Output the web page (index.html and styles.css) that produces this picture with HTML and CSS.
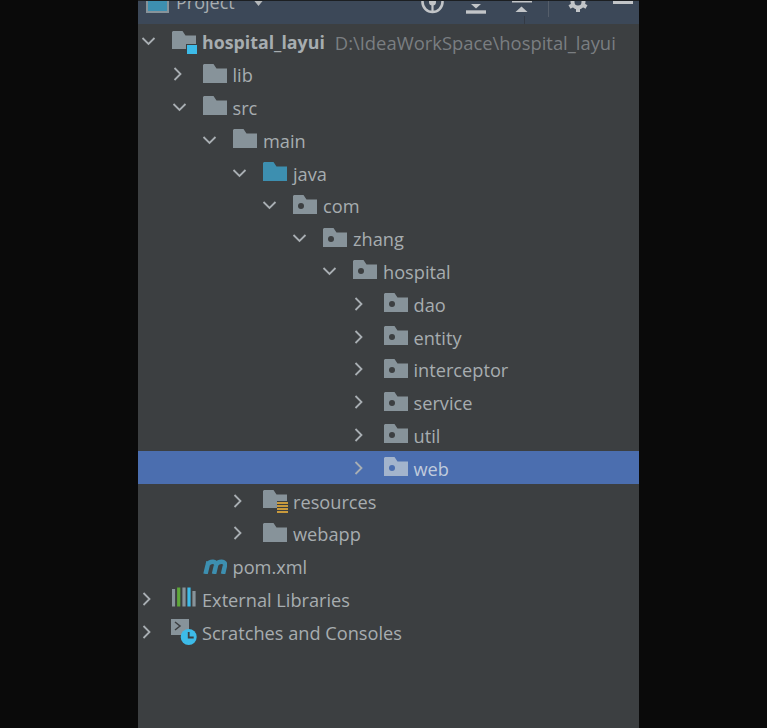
FILE: index.html
```html
<!DOCTYPE html>
<html>
<head>
    <title>Project</title>
    <link rel="stylesheet" href="styles.css">
</head>
<body>
    <svg class="defs" width="0" height="0">
        <symbol id="open" viewBox="0 0 16 16"><path d="M1.500 5l6 6 6-6" fill="none" stroke="#a9afb3" stroke-width="1.8"/></symbol>
        <symbol id="closed" viewBox="0 0 16 16"><path d="M2.500 2l6 6-6 6" fill="none" stroke="#a9afb3" stroke-width="1.8"/></symbol>
        <symbol id="folder" viewBox="0 0 24 20"><path d="M1 1h9.500l3 4.500H24V20H0V2z" fill="#87939a"/></symbol>
        <symbol id="pkg" viewBox="0 0 24 20"><path d="M1 1h9.500l3 4.500H24V20H0V2z" fill="#87939a"/><circle cx="8" cy="12" r="3" fill="#3c3f41"/></symbol>
        <symbol id="source" viewBox="0 0 24 20"><path d="M1 1h9.500l3 4.500H24V20H0V2z" fill="#3d8fb0"/></symbol>
    </svg>

    <div class="panel">
        <div class="toolbar">
            <div class="toolbar-row">
                <svg class="view-icon" width="23" height="22" viewBox="0 0 23 22"><rect x="1" y="1" width="21" height="20" fill="#3d8fb0" stroke="#87939a" stroke-width="2"/></svg>
                <span class="toolbar-title">Project</span>
                <svg class="caret" width="13" height="8" viewBox="0 0 13 8"><path d="M0 0h13L6.500 8z" fill="#b4b8bb"/></svg>
                <span class="spacer"></span>
                <svg class="tool globe" width="23" height="24" viewBox="0 0 23 24"><circle cx="11.500" cy="12" r="10" fill="none" stroke="#c2c5c8" stroke-width="2.600"/><circle cx="11.500" cy="12" r="3.500" fill="#c2c5c8"/><path d="M11.500 12v10" stroke="#c2c5c8" stroke-width="2.200"/></svg>
                <svg class="tool collapse" width="20" height="24" viewBox="0 0 20 24"><path d="M5 14h10l-5 4.500z" fill="#c2c5c8"/><path d="M0 22h20" stroke="#c2c5c8" stroke-width="3.400"/></svg>
                <svg class="tool expand" width="20" height="24" viewBox="0 0 20 24"><path d="M0 11h20" stroke="#c2c5c8" stroke-width="3"/><path d="M3.500 22h12l-6-5.500z" fill="#c2c5c8"/></svg>
                <span class="separator"></span>
                <svg class="tool gear" width="20" height="24" viewBox="0 0 20 24"><circle cx="10" cy="12" r="5.500" fill="none" stroke="#c2c5c8" stroke-width="4"/><path d="M10 2v4M10 18v4M1.500 7l3.500 2M15 15l3.500 2M1.500 17l3.500-2M15 9l3.500-2" stroke="#c2c5c8" stroke-width="4"/></svg>
                <span class="minimize"></span>
            </div>
        </div>

        <div class="tree">
            <div class="row d0"><svg class="chev"><use href="#open"/></svg>
                <svg class="icon icon-wide" viewBox="0 0 25 23"><path d="M1 0h9.500l3 4.500H24V18H0V1z" fill="#87939a"/><rect x="14.500" y="13.500" width="11" height="10" fill="#3dbbe8" stroke="#3c3f41"/></svg>
                <span class="name strong">hospital_layui</span><span class="path">D:\IdeaWorkSpace\hospital_layui</span></div>
            <div class="row d1"><svg class="chev"><use href="#closed"/></svg><svg class="icon"><use href="#folder"/></svg><span class="name">lib</span></div>
            <div class="row d1"><svg class="chev"><use href="#open"/></svg><svg class="icon"><use href="#folder"/></svg><span class="name">src</span></div>
            <div class="row d2"><svg class="chev"><use href="#open"/></svg><svg class="icon"><use href="#folder"/></svg><span class="name">main</span></div>
            <div class="row d3"><svg class="chev"><use href="#open"/></svg><svg class="icon"><use href="#source"/></svg><span class="name">java</span></div>
            <div class="row d4"><svg class="chev"><use href="#open"/></svg><svg class="icon"><use href="#pkg"/></svg><span class="name">com</span></div>
            <div class="row d5"><svg class="chev"><use href="#open"/></svg><svg class="icon"><use href="#pkg"/></svg><span class="name">zhang</span></div>
            <div class="row d6"><svg class="chev"><use href="#open"/></svg><svg class="icon"><use href="#pkg"/></svg><span class="name">hospital</span></div>
            <div class="row d7"><svg class="chev"><use href="#closed"/></svg><svg class="icon"><use href="#pkg"/></svg><span class="name">dao</span></div>
            <div class="row d7"><svg class="chev"><use href="#closed"/></svg><svg class="icon"><use href="#pkg"/></svg><span class="name">entity</span></div>
            <div class="row d7"><svg class="chev"><use href="#closed"/></svg><svg class="icon"><use href="#pkg"/></svg><span class="name">interceptor</span></div>
            <div class="row d7"><svg class="chev"><use href="#closed"/></svg><svg class="icon"><use href="#pkg"/></svg><span class="name">service</span></div>
            <div class="row d7"><svg class="chev"><use href="#closed"/></svg><svg class="icon"><use href="#pkg"/></svg><span class="name">util</span></div>
            <div class="row d7 selected"><svg class="chev"><use href="#closed"/></svg>
                <svg class="icon" viewBox="0 0 24 20"><path d="M1 1h9.500l3 4.500H24V20H0V2z" fill="#a3b4cc"/><circle cx="8" cy="12" r="3" fill="#4b6eaf"/></svg>
                <span class="name">web</span></div>
            <div class="row d3"><svg class="chev"><use href="#closed"/></svg>
                <svg class="icon icon-wide" viewBox="0 0 25 23"><path d="M1 0h9.500l3 4.500H24V11H14v7H0V1z" fill="#87939a"/><path d="M14 13h11M14 16h11M14 19h11M14 22h11" stroke="#c99a3c" stroke-width="2"/></svg>
                <span class="name">resources</span></div>
            <div class="row d3"><svg class="chev"><use href="#closed"/></svg><svg class="icon"><use href="#folder"/></svg><span class="name">webapp</span></div>
            <div class="row d1"><span class="chev"></span>
                <svg class="icon icon-maven" viewBox="0 0 24 15"><path d="M2.500 15L5.500 2.500M4.500 6C7 1.500 14 1.500 13 6.500L11 15M13 6C15.500 1.500 23 1.500 22 6.500L20 15" fill="none" stroke="#3d8fb0" stroke-width="4.500"/></svg>
                <span class="name">pom.xml</span></div>
            <div class="row d0"><svg class="chev"><use href="#closed"/></svg>
                <svg class="icon" viewBox="0 0 24 20"><path d="M1.500 2v17.500M12 .5v19M22 4v15.500" fill="none" stroke="#87939a" stroke-width="3.200"/><path d="M6.700 .5v19" stroke="#5fa83a" stroke-width="3.200"/><path d="M17 .5v19" stroke="#3dbbe8" stroke-width="3.200"/></svg>
                <span class="name">External Libraries</span></div>
            <div class="row d0"><svg class="chev"><use href="#closed"/></svg>
                <svg class="icon icon-scratch" viewBox="0 0 26 26"><rect x="0" y="0" width="18" height="16" fill="#87939a"/><path d="M4 3l5 4-5 4" fill="none" stroke="#3c3f41" stroke-width="1.500"/><circle cx="17.700" cy="18" r="8" fill="#3dbbe8"/><path d="M17.700 13v5.500h5" fill="none" stroke="#3c3f41" stroke-width="1.800"/></svg>
                <span class="name">Scratches and Consoles</span></div>
        </div>
    </div>
</body>
</html>
```

FILE: styles.css
```css
html, body {
    margin: 0;
    height: 100%;
    overflow: hidden;
}
body {
    background-color: #0a0a0a;
    font-family: "Open Sans", sans-serif;
    color: #a7adb0;
}
.defs {
    display: block;
}
.panel {
    width: 501px;
    height: 100%;
    margin-left: 138px;
    background-color: #3c3f41;
}
.toolbar {
    position: relative;
    height: 23px;
    background-color: #3c4858;
    border-top: 1px solid #1c1f22;
    overflow: hidden;
}
.toolbar::after {
    content: "";
    position: absolute;
    left: 386px;
    top: 15px;
    width: 1px;
    height: 8px;
    background-color: #333a45;
}
.toolbar-row {
    display: flex;
    align-items: center;
    height: 2px;
    padding-left: 8px;
}
.view-icon {
    flex: none;
}
.toolbar-title {
    margin-left: 7px;
    font-size: 18px;
    color: #a7adb0;
}
.caret {
    margin-left: 17px;
    flex: none;
}
.spacer {
    flex: 1;
}
.tool {
    flex: none;
}
.globe {
    margin-right: 22px;
}
.collapse {
    margin-right: 26px;
}
.expand {
    margin-right: 16px;
}
.separator {
    flex: none;
    width: 1px;
    height: 30px;
    margin-right: 19px;
    background-color: #555e6a;
}
.gear {
    margin-right: 25px;
}
.minimize {
    flex: none;
    width: 20px;
    height: 4px;
    margin-right: 6px;
    background-color: #c2c5c8;
}
.tree {
    padding-top: 1px;
}
.row {
    display: flex;
    align-items: center;
    height: 32.8px;
    font-size: 18.2px;
    white-space: nowrap;
}
.selected {
    background-color: #4b6eaf;
    color: #c0cbdc;
}
.d0 { padding-left: 3px; }
.d1 { padding-left: 33.5px; }
.d2 { padding-left: 64px; }
.d3 { padding-left: 94px; }
.d4 { padding-left: 124px; }
.d5 { padding-left: 154px; }
.d6 { padding-left: 184px; }
.d7 { padding-left: 214.5px; }
.chev {
    flex: none;
    width: 16px;
    height: 16px;
}
.icon {
    flex: none;
    width: 24px;
    height: 20px;
    margin: 0 6px 3px 15px;
}
.icon-wide {
    width: 25px;
    height: 23px;
    margin: 2px 5px 0 15px;
}
.icon-maven {
    height: 15px;
    margin: 1px 6px 0 15px;
}
.icon-scratch {
    width: 26px;
    height: 26px;
    margin: 0 5px 0 14px;
}
.name, .path {
    padding-top: 2px;
}
.strong {
    font-size: 17.8px;
    font-weight: 700;
}
.path {
    margin-left: 10px;
    font-size: 18.4px;
    color: #7a7e81;
}
```
